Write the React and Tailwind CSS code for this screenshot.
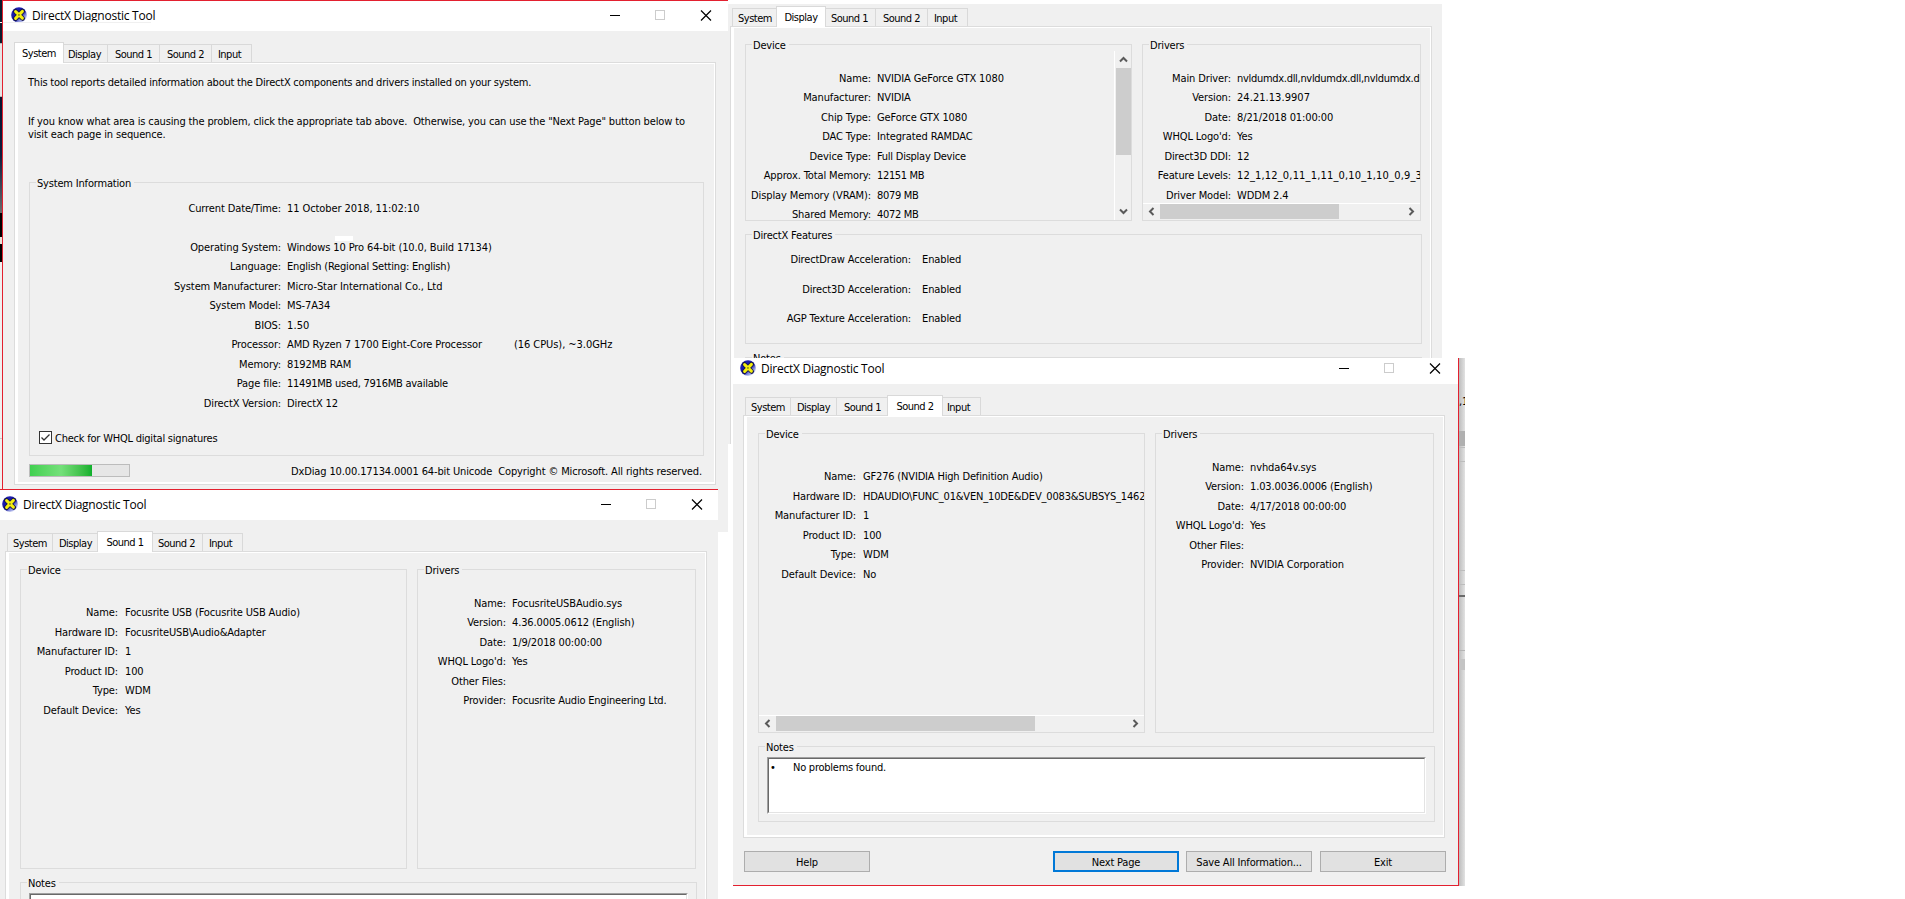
import { clsx } from "clsx"

const TABS = [
  { name: "System", width: "w-[46px]", activeWidth: "w-[50px]" },
  { name: "Display", width: "w-[46px]", activeWidth: "w-[50px]" },
  { name: "Sound 1", width: "w-[52px]", activeWidth: "w-[56px]" },
  { name: "Sound 2", width: "w-[52px]", activeWidth: "w-[56px]" },
  { name: "Input", width: "w-[40px] pr-1", activeWidth: "w-[44px]" },
]

// [label, value, text after the value, letter spacing of the value]
const systemRows = [
  ["Current Date/Time:", "11 October 2018, 11:02:10", "", "tracking-[-0.08px]"],
  ["", ""],
  ["Operating System:", "Windows 10 Pro 64-bit (10.0, Build 17134)"],
  ["Language:", "English (Regional Setting: English)", "", "tracking-[-0.2px]"],
  ["System Manufacturer:", "Micro-Star International Co., Ltd", "", "tracking-[-0.08px]"],
  ["System Model:", "MS-7A34"],
  ["BIOS:", "1.50", "", "tracking-[0.1px]"],
  ["Processor:", "AMD Ryzen 7 1700 Eight-Core Processor", "(16 CPUs), ~3.0GHz"],
  ["Memory:", "8192MB RAM"],
  ["Page file:", "11491MB used, 7916MB available", "", "tracking-[-0.25px]"],
  ["DirectX Version:", "DirectX 12"],
]

const displayDeviceRows = [
  ["Name:", "NVIDIA GeForce GTX 1080"],
  ["Manufacturer:", "NVIDIA"],
  ["Chip Type:", "GeForce GTX 1080"],
  ["DAC Type:", "Integrated RAMDAC"],
  ["Device Type:", "Full Display Device", "", "tracking-[-0.25px]"],
  ["Approx. Total Memory:", "12151 MB", "", "tracking-[-0.35px]"],
  ["Display Memory (VRAM):", "8079 MB", "", "tracking-[-0.3px]"],
  ["Shared Memory:", "4072 MB", "", "tracking-[-0.3px]"],
]

const displayDriverRows = [
  ["Main Driver:", "nvldumdx.dll,nvldumdx.dll,nvldumdx.dll", "", "tracking-[-0.3px]"],
  ["Version:", "24.21.13.9907", "", "tracking-[0.05px]"],
  ["Date:", "8/21/2018 01:00:00"],
  ["WHQL Logo'd:", "Yes"],
  ["Direct3D DDI:", "12"],
  ["Feature Levels:", "12_1,12_0,11_1,11_0,10_1,10_0,9_3", "", "tracking-[0.17px]"],
  ["Driver Model:", "WDDM 2.4"],
]

const featureRows = [
  ["DirectDraw Acceleration:", "Enabled"],
  ["Direct3D Acceleration:", "Enabled"],
  ["AGP Texture Acceleration:", "Enabled"],
]

const sound1DeviceRows = [
  ["Name:", "Focusrite USB (Focusrite USB Audio)"],
  ["Hardware ID:", "FocusriteUSB\\Audio&Adapter"],
  ["Manufacturer ID:", "1"],
  ["Product ID:", "100"],
  ["Type:", "WDM"],
  ["Default Device:", "Yes"],
]

const sound1DriverRows = [
  ["Name:", "FocusriteUSBAudio.sys"],
  ["Version:", "4.36.0005.0612 (English)"],
  ["Date:", "1/9/2018 00:00:00"],
  ["WHQL Logo'd:", "Yes"],
  ["Other Files:", ""],
  ["Provider:", "Focusrite Audio Engineering Ltd.", "", "tracking-[-0.2px]"],
]

const sound2DeviceRows = [
  ["Name:", "GF276 (NVIDIA High Definition Audio)", "", "tracking-[-0.17px]"],
  ["Hardware ID:", "HDAUDIO\\FUNC_01&VEN_10DE&DEV_0083&SUBSYS_14623", "", "tracking-[-0.17px]"],
  ["Manufacturer ID:", "1"],
  ["Product ID:", "100"],
  ["Type:", "WDM"],
  ["Default Device:", "No"],
]

const sound2DriverRows = [
  ["Name:", "nvhda64v.sys"],
  ["Version:", "1.03.0036.0006 (English)"],
  ["Date:", "4/17/2018 00:00:00"],
  ["WHQL Logo'd:", "Yes"],
  ["Other Files:", ""],
  ["Provider:", "NVIDIA Corporation"],
]

const DxIcon = () => (
  <svg width="16" height="16" viewBox="0 0 16 16" className="shrink-0">
    <defs>
      <linearGradient id="dxBall" x1="0.15" y1="0.1" x2="0.9" y2="0.95">
        <stop offset="0" stopColor="#2222b4" />
        <stop offset="0.5" stopColor="#1212a0" />
        <stop offset="0.72" stopColor="#8a92dc" />
        <stop offset="1" stopColor="#dfe4fa" />
      </linearGradient>
    </defs>
    <circle cx="8" cy="8" r="7.8" fill="url(#dxBall)" />
    <path d="M4.4 4.4 11.6 11.4M11.6 4.2 4.4 11.6" stroke="#15154a" strokeWidth="4.8" strokeLinecap="round" />
    <path d="M4.6 4.6 11.4 11.2M11.4 4.4 4.6 11.4" stroke="#f4ee10" strokeWidth="3" strokeLinecap="round" />
    <rect x="7.2" y="7.2" width="1.5" height="1.5" fill="#6a6a20" />
  </svg>
)

const TitleBar = () => (
  <div className="flex h-[30px] bg-white pl-2 pt-[6px]">
    <DxIcon />
    <span className="ml-[5px] mt-px w-[578px] whitespace-pre font-['Open_Sans','Noto_Sans',sans-serif] text-xs leading-4 tracking-[-0.25px]">
      DirectX Diagnostic Tool
    </span>
    <svg width="102" height="11" viewBox="0 0 102 11" className="mt-[3px] shrink-0">
      <path d="M0 5.5H10" stroke="#000" />
      <rect x="45.5" y="0.5" width="9" height="9" fill="none" stroke="#ccc" />
      <path d="M91 0.5 101 10.5M101 0.5 91 10.5" stroke="#000" strokeWidth="1.2" />
    </svg>
  </div>
)

const Tabs = ({ active }) => (
  <div className="flex h-[31px] items-end pl-[13px]">
    {TABS.map((tab, i) => (
      <div
        key={tab.name}
        className={clsx(
          "shrink-0 whitespace-pre border-[#d9d9d9] text-center tracking-[-0.5px]",
          tab.name === active
            ? clsx("relative z-10 -mx-0.5 -mb-px h-[21px] border-x border-t bg-white pt-1", tab.activeWidth)
            : clsx("h-[18px] border-r border-t pt-[3px]", tab.width, i === 0 && "border-l"),
        )}
      >
        {tab.name}
      </div>
    ))}
  </div>
)

const GroupBox = ({ title, className, children }) => (
  <div className={clsx("relative border border-[#dcdcdc]", className)}>
    <span className="absolute -top-[6px] left-[6px] whitespace-pre bg-[#f0f0f0] pl-px pr-[3px]">{title}</span>
    <div className="flex h-full flex-col overflow-hidden">{children}</div>
  </div>
)

const Rows = ({ rows, labelWidth, gap = "gap-[7px]", rowHeight = "h-[19.5px]", className }) => (
  <div className={clsx("shrink-0", className)}>
    {rows.map(([label, value, extra, tracking], i) => (
      <div key={i} className={clsx("flex whitespace-pre tracking-[-0.12px]", gap, rowHeight)}>
        <span className={clsx("shrink-0 text-right", labelWidth)}>{label}</span>
        <span className={tracking}>{value}</span>
        {extra && <span className="ml-[26px] tracking-[-0.05px]">{extra}</span>}
      </div>
    ))}
  </div>
)

const Arrow = ({ dir }) => {
  const paths = {
    left: "M6.5 1 3 4.5 6.5 8",
    right: "M2.5 1 6 4.5 2.5 8",
    up: "M1 6.5 4.5 3 8 6.5",
    down: "M1 2.5 4.5 6 8 2.5",
  }
  return (
    <svg width="9" height="9" viewBox="0 0 9 9" className="shrink-0">
      <path d={paths[dir]} fill="none" stroke="#5a5a5a" strokeWidth="2" />
    </svg>
  )
}

const HScroll = ({ thumb }) => (
  <div className="mt-auto flex h-[17px] shrink-0 items-center border-t border-white pb-px">
    <div className="flex w-[17px] shrink-0 justify-center pr-px">
      <Arrow dir="left" />
    </div>
    <div className={clsx("h-[15px] bg-[#cdcdcd]", thumb)} />
    <div className="ml-auto flex w-[17px] shrink-0 justify-center">
      <Arrow dir="right" />
    </div>
  </div>
)

const VScroll = () => (
  <div className="mt-[6px] flex w-[17px] shrink-0 flex-col items-center border-l border-white">
    <div className="flex h-[17px] shrink-0 items-center">
      <Arrow dir="up" />
    </div>
    <div className="h-[87px] w-[15px] shrink-0 bg-[#cdcdcd]" />
    <div className="mt-auto flex h-[17px] shrink-0 items-center">
      <Arrow dir="down" />
    </div>
  </div>
)

const Notes = () => (
  <GroupBox title="Notes" className="mt-[13px] h-[76px] w-[677px]">
    <div className="ml-2 mt-[10px] h-[57px] w-[659px] border border-b-white border-l-[#a0a0a0] border-r-white border-t-[#a0a0a0]">
      <div className="flex h-full border border-b-[#e3e3e3] border-l-[#696969] border-r-[#e3e3e3] border-t-[#696969] bg-white pl-px pt-[2px]">
        <span className="w-[23px] shrink-0">•</span>
        <span className="tracking-[-0.25px]">No problems found.</span>
      </div>
    </div>
  </GroupBox>
)

const SystemTab = () => (
  <>
    <p className="-ml-px mt-3 whitespace-pre tracking-[-0.22px]">
      This tool reports detailed information about the DirectX components and drivers installed on your system.
    </p>
    <p className="-ml-px mt-[26px] whitespace-pre tracking-[-0.14px]">
      {'If you know what area is causing the problem, click the appropriate tab above.  Otherwise, you can use the "Next Page" button below to\nvisit each page in sequence.'}
    </p>
    <GroupBox title="System Information" className="mt-[41px] h-[274px] w-[675px]">
      <Rows rows={systemRows} labelWidth="w-[251px]" gap="gap-[6px]" className="mt-[18.75px]" />
      <div className="mt-[14.75px] flex items-start gap-[3px] pl-[9px]">
        <svg width="13" height="13" viewBox="0 0 13 13">
          <rect x="0.5" y="0.5" width="12" height="12" fill="#fff" stroke="#333" />
          <path d="M2.5 6.5 5 9 10.5 3.5" fill="none" stroke="#333" strokeWidth="1.3" />
        </svg>
        <span className="mt-px tracking-[-0.22px]">Check for WHQL digital signatures</span>
      </div>
    </GroupBox>
    <div className="mt-2 flex w-[673px] items-start justify-between">
      <div className="h-[13px] w-[101px] border border-[#bcbcbc] bg-[#e6e6e6]">
        <div className="h-full w-[62px] bg-linear-to-r from-[#3fd04f] via-[#74e07a] to-[#0cb02c]" />
      </div>
      <span className="mt-px whitespace-pre tracking-[-0.13px]">
        {"DxDiag 10.00.17134.0001 64-bit Unicode  Copyright © Microsoft. All rights reserved."}
      </span>
    </div>
  </>
)

const DisplayTab = () => (
  <>
    <div className="mt-4 flex gap-[10px]">
      <GroupBox title="Device" className="h-[177px] w-[387px]">
        <div className="flex h-full">
          <Rows rows={displayDeviceRows} labelWidth="w-[125px]" gap="gap-[6px]" className="mt-[26.75px] w-[368px]" />
          <VScroll />
        </div>
      </GroupBox>
      <GroupBox title="Drivers" className="h-[177px] w-[279px]">
        <Rows rows={displayDriverRows} labelWidth="w-[88px]" gap="gap-[6px]" className="mt-[26.75px] h-[131px]" />
        <HScroll thumb="w-[179px]" />
      </GroupBox>
    </div>
    <GroupBox title="DirectX Features" className="mt-[13px] h-[110px] w-[677px]">
      <Rows rows={featureRows} labelWidth="w-[165px]" gap="gap-[11px]" rowHeight="h-[29.5px]" className="mt-[18px]" />
    </GroupBox>
    <Notes />
  </>
)

const SoundTab = ({ device, drivers, scroll }) => (
  <>
    <div className="mt-4 flex gap-[10px]">
      <GroupBox title="Device" className="h-[300px] w-[387px]">
        <Rows rows={device} labelWidth="w-[97px]" className="mt-[36.25px]" />
        {scroll && <HScroll thumb="w-[259px]" />}
      </GroupBox>
      <GroupBox title="Drivers" className="h-[300px] w-[279px]">
        <Rows rows={drivers} labelWidth="w-[88px]" gap="gap-[6px]" className="mt-[26.75px]" />
      </GroupBox>
    </div>
    <Notes />
  </>
)

const Button = ({ primary, className, children }) => (
  <button
    className={clsx(
      "h-[21px] w-[126px] bg-[#e1e1e1] leading-[13px]",
      primary ? "border-2 border-[#0078d7] pt-px" : "border border-[#adadad] pt-[2px]",
      className,
    )}
  >
    {children}
  </button>
)

const DxWindow = ({ tab, className, children }) => (
  <div className={clsx("flex h-[533px] w-[728px] flex-col border border-[#e3202f] bg-[#f0f0f0]", className)}>
    <TitleBar />
    <Tabs active={tab} />
    <div className="ml-[11px] h-[423px] w-[702px] shrink-0 border border-[#dcdcdc]">
      <div className="h-full overflow-hidden border border-b-2 border-l-[3px] border-white pl-[11px]">{children}</div>
    </div>
    <div className="mt-[13px] flex pl-3">
      <Button>Help</Button>
      <Button primary className="ml-[183px]">Next Page</Button>
      <Button className="ml-[7px]">Save All Information...</Button>
      <Button className="ml-2">Exit</Button>
    </div>
  </div>
)

// Desktop leftovers that peek out to the left of the first window
const LeftEdge = () => (
  <div className="absolute left-0 top-0 flex h-[489px] w-[2px] flex-col bg-[#f0f0f0]">
    <div className="h-[22px] bg-[#0b1a2c]" />
    <div className="h-px bg-white" />
    <div className="h-5 bg-[#0b1a2c]" />
    <div className="h-[54px] border-y border-[#b8b8b8] bg-[#e6e6e6]" />
    <div className="h-[116px] bg-linear-to-b from-[#06122e] via-[#0e1c3c] to-[#6c6c6c]" />
    <div className="h-6 bg-black" />
    <div className="h-[7px] bg-[#e8e4da]" />
    <div className="h-[18px] bg-black" />
    <div className="mt-[176px] h-px bg-[#c8c8c8]" />
  </div>
)

// Shadowed sliver of the window behind the last one
const RightEdge = () => (
  <div className="absolute left-[1459px] top-[358px] flex h-[528px] w-[6px] flex-col overflow-hidden bg-linear-to-r from-[#bdbdbd] to-[#e2e2e2]">
    <div className="mt-[37px] h-[14px] whitespace-pre">,1</div>
    <div className="mt-[22px] h-[15px] bg-[#b0b0b0]" />
    <div className="mt-px h-px bg-[#bcbcbc]" />
    <div className="mt-[13px] h-px bg-[#bcbcbc]" />
    <div className="mt-[108px] h-px bg-[#bcbcbc]" />
    <div className="mt-[13px] h-px bg-[#bcbcbc]" />
    <div className="mt-[10px] h-[2px] bg-[#6a6a6a]" />
    <div className="mt-[53px] h-px bg-[#b4b4b4]" />
    <div className="mt-2 h-[11px] bg-[#c4c4c4]" />
  </div>
)

const App = () => {
  return (
    <div className="relative h-[899px] w-[1905px] overflow-hidden bg-white font-['DejaVu_Sans_Condensed','DejaVu_Sans',sans-serif] text-[11px] leading-[13px] tracking-[-0.18px] text-black">
      <LeftEdge />

      <div className="absolute left-[728px] top-1 h-[440px] w-[714px] overflow-hidden">
        <DxWindow tab="Display" className="-ml-[10px] -mt-10">
          <DisplayTab />
        </DxWindow>
      </div>

      <div className="absolute left-[2px] top-0 h-[532px] w-[726px] overflow-hidden">
        <DxWindow tab="System">
          <SystemTab />
        </DxWindow>
        <div className="absolute left-[333px] top-[236px] h-[5px] w-[18px] bg-white" />
        <div className="absolute left-px top-[22px] h-px w-[148px] bg-[#f0f0f0]" />
      </div>

      <div className="absolute left-0 top-[489px] h-[410px] w-[718px] overflow-hidden">
        <DxWindow tab="Sound 1" className="-ml-[7px]">
          <SoundTab device={sound1DeviceRows} drivers={sound1DriverRows} />
        </DxWindow>
      </div>

      <RightEdge />
      <div className="absolute left-[733px] top-[358px] h-[528px] w-[726px] overflow-hidden">
        <DxWindow tab="Sound 2" className="-ml-[2px] -mt-[5px]">
          <SoundTab device={sound2DeviceRows} drivers={sound2DriverRows} scroll />
        </DxWindow>
      </div>
    </div>
  )
}

export default App
